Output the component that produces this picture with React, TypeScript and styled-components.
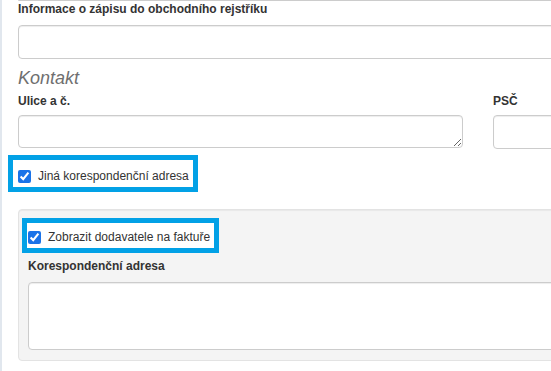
import React from 'react';
import styled, { createGlobalStyle } from 'styled-components';

const GlobalStyle = createGlobalStyle`
  html, body {
    margin: 0;
    padding: 0;
    background: #ffffff;
    overflow: hidden;
  }
  body {
    font-family: "Liberation Sans", Arial, Helvetica, sans-serif;
    font-size: 12px;
    color: #333333;
  }
`;

const Page = styled.div`
  min-height: 371px;
  border-left: 2px solid #e1e7ee;
  padding-left: 16px;
`;

const Content = styled.div`
  width: 640px;
  display: flex;
  flex-direction: column;
`;

const PrevField = styled.div`
  height: 0;
  border-bottom: 1px solid #cccccc;
  border-radius: 0 0 4px 4px;
`;

const Label = styled.label<{ $top?: number; $gap?: number }>`
  display: block;
  font-weight: bold;
  font-size: 12px;
  line-height: 17px;
  margin-top: ${({ $top }) => $top ?? 0}px;
  margin-bottom: ${({ $gap }) => $gap ?? 5}px;
`;

const TextInput = styled.input`
  box-sizing: border-box;
  display: block;
  width: 100%;
  height: 34px;
  margin: 0;
  padding: 6px 12px;
  border: 1px solid #cccccc;
  border-radius: 4px;
  background: #ffffff;
  box-shadow: inset 0 1px 1px rgba(0, 0, 0, 0.075);
  font: inherit;
  outline: none;
`;

const TextArea = styled.textarea<{ $height: number }>`
  box-sizing: border-box;
  display: block;
  width: 100%;
  height: ${({ $height }) => $height}px;
  margin: 0;
  padding: 6px 12px;
  border: 1px solid #cccccc;
  border-radius: 4px;
  background: #ffffff;
  box-shadow: inset 0 1px 1px rgba(0, 0, 0, 0.075);
  font: inherit;
  outline: none;
`;

const SectionTitle = styled.h4`
  margin: 9px 0 5px;
  font-size: 18px;
  line-height: 20px;
  font-style: italic;
  font-weight: normal;
  color: #6f6f6f;
`;

const AddressRow = styled.div`
  display: grid;
  grid-template-columns: 445px 147px;
  column-gap: 30px;
`;

const Highlight = styled.div<{ $shift: number; $top: number; $padLeft: number }>`
  align-self: flex-start;
  display: inline-flex;
  border: 5px solid #02a1e6;
  margin-top: ${({ $top }) => $top}px;
  margin-left: -${({ $shift }) => $shift}px;
  padding: 6px 4px 2px ${({ $padLeft }) => $padLeft}px;
  background: #ffffff;
`;

const CheckLabel = styled.label<{ $lift?: number }>`
  display: flex;
  align-items: center;
  gap: 7px;
  height: 17px;
  margin-top: ${({ $lift }) => $lift ?? 0}px;
  font-size: 12px;
  line-height: 17px;
  color: #333333;
  white-space: nowrap;
`;

const Check = styled.input`
  width: 13px;
  height: 13px;
  margin: 0;
  accent-color: #1a73e8;
`;

const Well = styled.div`
  display: flex;
  flex-direction: column;
  margin-top: 17px;
  padding: 8px 9px 10px;
  background: #f4f4f4;
  border: 1px solid #e3e3e3;
  border-radius: 4px;
  box-shadow: inset 0 1px 1px rgba(0, 0, 0, 0.05);
`;

export default function App() {
  return (
    <>
      <GlobalStyle />
      <Page>
        <Content>
          <PrevField />
          <Label $gap={7}>Informace o zápisu do obchodního rejstříku</Label>
          <TextInput type="text" />

          <SectionTitle>Kontakt</SectionTitle>
          <AddressRow>
            <div>
              <Label>Ulice a č.</Label>
              <TextArea $height={33} />
            </div>
            <div>
              <Label>PSČ</Label>
              <TextInput type="text" />
            </div>
          </AddressRow>

          <Highlight $shift={10} $top={6} $padLeft={5}>
            <CheckLabel $lift={2}>
              <Check type="checkbox" defaultChecked />
              Jiná korespondenční adresa
            </CheckLabel>
          </Highlight>

          <Well>
            <Highlight $shift={6} $top={0} $padLeft={1}>
              <CheckLabel>
                <Check type="checkbox" defaultChecked />
                Zobrazit dodavatele na faktuře
              </CheckLabel>
            </Highlight>
            <Label $top={5} $gap={7}>Korespondenční adresa</Label>
            <TextArea $height={68} />
          </Well>
        </Content>
      </Page>
    </>
  );
}
